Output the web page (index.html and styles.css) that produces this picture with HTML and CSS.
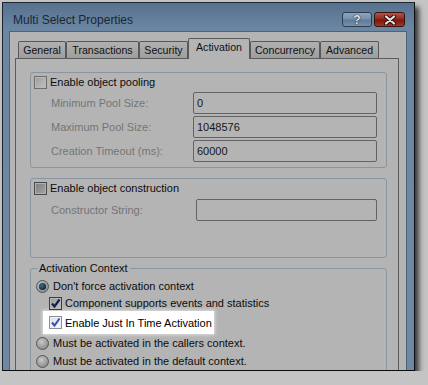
FILE: index.html
```html
<!DOCTYPE html>
<html lang="en">
<head>
    <meta charset="UTF-8">
    <meta name="viewport" content="width=device-width, initial-scale=1.0">
    <title>Multi Select Properties</title>
    <link rel="stylesheet" href="styles.css">
</head>
<body>
    <div class="window">
        <div class="titlebar">
            <span class="title">Multi Select Properties</span>
            <div class="caption-buttons">
                <span class="cap-btn help">?</span>
                <span class="cap-btn close">
                    <svg width="14" height="10" viewBox="0 0 14 10">
                        <path d="M3 1.5 L11 8.5 M11 1.5 L3 8.5" stroke="#2a0a06" stroke-width="4" stroke-linecap="round"/>
                        <path d="M3 1.5 L11 8.5 M11 1.5 L3 8.5" stroke="#e4e4e4" stroke-width="2.2" stroke-linecap="round"/>
                    </svg>
                </span>
            </div>
        </div>

        <div class="client">
            <ul class="tabs">
                <li class="tab tab-general">General</li>
                <li class="tab tab-transactions">Transactions</li>
                <li class="tab tab-security">Security</li>
                <li class="tab tab-activation active">Activation</li>
                <li class="tab tab-concurrency">Concurrency</li>
                <li class="tab tab-advanced">Advanced</li>
            </ul>

            <div class="panel">
                <!-- object pooling -->
                <div class="group pooling">
                    <div class="check-row">
                        <span class="checkbox"></span>
                        <span>Enable object pooling</span>
                    </div>
                    <div class="fields">
                        <span class="field-label">Minimum Pool Size:</span>
                        <span class="textbox">0</span>
                        <span class="field-label">Maximum Pool Size:</span>
                        <span class="textbox">1048576</span>
                        <span class="field-label">Creation Timeout (ms):</span>
                        <span class="textbox">60000</span>
                    </div>
                </div>

                <!-- object construction -->
                <div class="group construction">
                    <div class="check-row">
                        <span class="checkbox dark"></span>
                        <span>Enable object construction</span>
                    </div>
                    <div class="fields">
                        <span class="field-label">Constructor String:</span>
                        <span class="textbox"></span>
                    </div>
                </div>

                <!-- activation context -->
                <fieldset class="group context">
                    <legend>Activation Context</legend>
                    <div class="radio-row first">
                        <span class="radio checked"></span>
                        <span>Don't force activation context</span>
                    </div>
                    <div class="check-row sub">
                        <span class="checkbox checked">
                            <svg width="11" height="11" viewBox="0 0 11 11"><path d="M2 5.5 L4.5 8.5 L9.5 1.5" fill="none" stroke="#14204a" stroke-width="2.2"/></svg>
                        </span>
                        <span>Component supports events and statistics</span>
                    </div>
                    <div class="highlight">
                        <span class="checkbox checked bright">
                            <svg width="11" height="11" viewBox="0 0 11 11"><path d="M2 5.5 L4.5 8.5 L9.5 1.5" fill="none" stroke="#3a4fb8" stroke-width="2"/></svg>
                        </span>
                        <span>Enable Just In Time Activation</span>
                    </div>
                    <div class="radio-row second">
                        <span class="radio"></span>
                        <span>Must be activated in the callers context.</span>
                    </div>
                    <div class="radio-row third">
                        <span class="radio"></span>
                        <span>Must be activated in the default context.</span>
                    </div>
                </fieldset>
            </div>
        </div>
    </div>
</body>
</html>
```

FILE: styles.css
```css
body {
    margin: 0;
    padding: 2px 0 0 2px;
    background-color: #c4c4c4;
    font-family: 'Liberation Sans', Arial, sans-serif;
    font-size: 11px;
    color: #0c0c0c;
}

.window {
    box-sizing: border-box;
    width: 413px;
    height: 369px;
    border: 1px solid #1c2631;
    border-right-color: #0c0c0c;
    border-bottom-color: #0c0c0c;
    background: linear-gradient(to bottom, #56728f 0, #6b86a3 26px, #6f89a5 100%);
    box-shadow: 4px 5px 5px rgba(0, 0, 0, 0.7);
    display: flex;
    flex-direction: column;
    overflow: hidden;
}

.titlebar {
    height: 28px;
    flex-shrink: 0;
    display: flex;
    align-items: flex-start;
    justify-content: space-between;
    padding: 0 9px 0 10px;
}

.title {
    font-size: 12px;
    color: #1b2633;
    margin-top: 10px;
}

.caption-buttons {
    display: flex;
    gap: 2px;
    margin-top: 9px;
}

.cap-btn {
    box-sizing: border-box;
    height: 15px;
    border-radius: 3px;
    display: flex;
    align-items: center;
    justify-content: center;
}

.cap-btn.help {
    width: 30px;
    border: 1px solid #2c3c4e;
    background: linear-gradient(to bottom, #8ea5bd 0, #7590ad 45%, #5f7b99 55%, #7891ab 100%);
    color: #e6e6e6;
    font-weight: bold;
    font-size: 12px;
    text-shadow: 0 0 1px #1a1a1a, 0 0 1px #1a1a1a;
}

.cap-btn.close {
    width: 31px;
    border: 1px solid #3b130e;
    background: linear-gradient(to bottom, #b0564a 0, #922a1d 45%, #7a150c 55%, #9c3a28 100%);
}

.client {
    flex: 1;
    margin: 0 7px 0 6px;
    background-color: #b4b4b4;
    border: 1px solid #4f6276;
    border-bottom: none;
    padding: 6px 7px 0 5px;
}

.tabs {
    list-style: none;
    margin: 0 0 0 3px;
    padding: 0;
    height: 20px;
    display: flex;
    align-items: flex-end;
}

.tab {
    box-sizing: border-box;
    height: 17px;
    border: 1px solid #585858;
    border-bottom: none;
    border-radius: 2px 2px 0 0;
    background: linear-gradient(to bottom, #b0b0b0, #9e9e9e);
    font-size: 10.6px;
    line-height: 16px;
    text-align: center;
    color: #101010;
}

.tab.active {
    height: 21px;
    margin-bottom: -1px;
    position: relative;
    z-index: 1;
    background: #b4b4b4;
    line-height: 17px;
}

.tab-general { width: 48px; }
.tab-transactions { width: 73px; }
.tab-security { width: 49px; }
.tab-activation { width: 62px; }
.tab-concurrency { width: 70px; }
.tab-advanced { width: 59px; }

.panel {
    box-sizing: border-box;
    width: 384px;
    height: 330px;
    border: 1px solid #5c5c5c;
    background-color: #b4b4b4;
    padding: 13px 0 0 14px;
}

.group {
    box-sizing: border-box;
    width: 357px;
    border: 1px solid #8a959f;
    border-radius: 3px;
    margin: 0;
}

.pooling {
    height: 96px;
    padding: 3px 0 0 3px;
}

.construction {
    height: 80px;
    margin-top: 10px;
    padding: 3px 0 0 3px;
}

.check-row,
.radio-row {
    display: flex;
    align-items: center;
    height: 13px;
    line-height: 13px;
    white-space: nowrap;
}

.checkbox {
    box-sizing: border-box;
    width: 13px;
    height: 13px;
    margin-right: 3px;
    border: 1px solid #6e6e6e;
    background: linear-gradient(135deg, #9c9c9c, #c2c2c2);
    box-shadow: inset 0 0 0 1px #b8b8b8;
    display: flex;
    align-items: center;
    justify-content: center;
    flex-shrink: 0;
}

.checkbox.dark {
    border-color: #4a4a4a;
    background: linear-gradient(135deg, #7c7c7c, #a6a6a6);
    box-shadow: inset 0 0 0 1px #b0b0b0;
}

.checkbox.checked {
    border-color: #3c3c3c;
    background: linear-gradient(135deg, #9a9a9a, #c4c4c4);
}

.checkbox.bright {
    border-color: #8a9099;
    background: linear-gradient(135deg, #dedede, #fafafa);
    box-shadow: inset 0 0 0 1px #f0f0f0;
}

.fields {
    display: grid;
    grid-template-columns: 142px 184px;
    grid-auto-rows: 22px;
    row-gap: 2px;
    align-items: center;
    padding-left: 17px;
    margin-top: 3px;
}

.construction .fields {
    grid-template-columns: 145px 181px;
    margin-top: 4px;
}

.field-label {
    color: #747474;
}

.textbox {
    box-sizing: border-box;
    height: 22px;
    border: 1px solid #636363;
    border-radius: 2px;
    padding-left: 3px;
    line-height: 20px;
    color: #151515;
}

.context {
    height: 120px;
    margin-top: 4px;
    padding: 5px 0 0 0;
}

.context legend {
    margin-left: 6px;
    padding: 0 2px;
    line-height: 13px;
}

.radio-row {
    padding-left: 5px;
}

.radio-row.second {
    margin-top: 3px;
}

.radio-row.third {
    margin-top: 5px;
}

.radio {
    box-sizing: border-box;
    width: 13px;
    height: 13px;
    margin-right: 4px;
    border-radius: 50%;
    border: 1px solid #555;
    background: radial-gradient(circle at 40% 35%, #c8c8c8, #8a8a8a 80%);
    display: flex;
    align-items: center;
    justify-content: center;
    flex-shrink: 0;
}

.radio.checked::after {
    content: "";
    width: 7px;
    height: 7px;
    border-radius: 50%;
    background: radial-gradient(circle at 40% 40%, #3d7294, #102638 70%);
}

.check-row.sub {
    padding-left: 18px;
    margin-top: 4px;
}

.highlight {
    box-sizing: border-box;
    width: 171px;
    height: 23px;
    margin: 1px 0 0 12px;
    padding-left: 6px;
    background-color: #fff;
    box-shadow: 0 0 3px 1px rgba(255, 255, 255, 0.55);
    display: flex;
    align-items: center;
    white-space: nowrap;
    color: #000;
}
```
